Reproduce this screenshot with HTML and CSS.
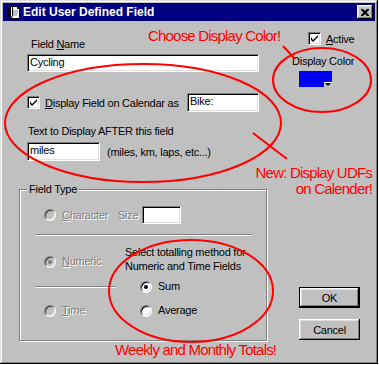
FILE: index.html
```html
<!DOCTYPE html>
<html lang="en">
<head>
  <meta charset="UTF-8">
  <title>Edit User Defined Field</title>
  <link rel="stylesheet" href="styles.css">
</head>
<body>
  <div class="window">
    <div class="titlebar">
      <svg class="app-icon" width="16" height="16" viewBox="0 0 16 16">
        <path d="M5.5 2.5h7l2 2v10h-9z" fill="#fff" stroke="#000"/>
        <path d="M12.5 2.5v2h2" fill="none" stroke="#000"/>
        <path d="M3.5 4.5v7a2 2 0 0 0 4 0v-8a1 1 0 0 0-2 0v7" fill="none" stroke="#000"/>
        <path d="M8 7h5M8 9h5M8 11h4" stroke="#808080"/>
      </svg>
      <span class="title">Edit User Defined Field</span>
      <span class="close">
        <svg width="8" height="7" viewBox="0 0 8 7"><path d="M0 0h2l2 2 2-2h2v1l-2.5 2.5 2.5 2.5v1h-2l-2-2-2 2h-2v-1l2.5-2.5-2.5-2.5z" fill="#000"/></svg>
      </span>
    </div>

    <div class="client">
      <div class="main">
        <div class="field-name">Field <u>N</u>ame</div>
        <div class="edit wide">Cycling</div>

        <div class="cal-row">
          <span class="check"><svg width="7" height="7" viewBox="0 0 7 7"><path d="M0 2v3l2 2 5-5v-2l-5 5z" fill="#000"/></svg></span>
          <span class="cal-label"><u>D</u>isplay Field on Calendar as</span>
          <div class="edit bike">Bike:</div>
        </div>

        <div class="after-label">Text to Display AFTER this field</div>
        <div class="after-row">
          <div class="edit miles">miles</div>
          <span class="hint">(miles, km, laps, etc...)</span>
        </div>

        <fieldset class="group">
          <legend>Field Type</legend>
          <div class="char-row">
            <span class="radio off"></span>
            <span class="opt dim char"><u>C</u>haracter</span>
            <span class="dim size">Size</span>
            <div class="edit small"></div>
          </div>
          <div class="sep long"></div>
          <div class="type">
            <div class="type-left">
              <div class="opt-row numeric">
                <span class="radio off on"></span>
                <span class="opt dim"><u>N</u>umeric</span>
              </div>
              <div class="sep short"></div>
              <div class="opt-row time">
                <span class="radio off"></span>
                <span class="opt dim"><u>T</u>ime</span>
              </div>
            </div>
            <div class="type-right">
              <div class="method">Select totalling method for<br>Numeric and Time Fields</div>
              <div class="opt-row sum">
                <span class="radio on"></span>
                <span class="opt">Sum</span>
              </div>
              <div class="opt-row avg">
                <span class="radio"></span>
                <span class="opt">Average</span>
              </div>
            </div>
          </div>
        </fieldset>
      </div>

      <div class="side">
        <div class="active">
          <span class="check"><svg width="7" height="7" viewBox="0 0 7 7"><path d="M0 2v3l2 2 5-5v-2l-5 5z" fill="#000"/></svg></span>
          <span class="active-label"><u>A</u>ctive</span>
        </div>
        <div class="color-label">Display Color</div>
        <div class="swatch"><span class="drop"></span></div>
        <div class="btn default">OK</div>
        <div class="btn cancel">Cancel</div>
      </div>
    </div>

    <svg class="marks" width="379" height="365" viewBox="0 0 379 365">
      <ellipse cx="143" cy="123" rx="138" ry="59"/>
      <path d="M253 133L287 159"/>
      <ellipse cx="322" cy="80" rx="49" ry="32"/>
      <path d="M283 46L295 59"/>
      <ellipse cx="191" cy="291" rx="82" ry="51"/>
    </svg>
    <div class="note note-color">Choose Display Color!</div>
    <div class="note note-new">New: Display UDFs<br>on Calender!</div>
    <div class="note note-totals">Weekly and Monthly Totals!</div>
  </div>
</body>
</html>
```

FILE: styles.css
```css
body{
	margin: 0;
	background: #fff;
	font-family: "Liberation Sans", Arial, sans-serif;
	font-size: 11px;
	letter-spacing: -0.25px;
	color: #000;
}
.window{
	position: relative;
	width: 378px;
	height: 364px;
	box-sizing: border-box;
	padding: 3px;
	background: #c0c0c0;
	box-shadow: inset -1px -1px #000, inset 1px 1px #dfdfdf, inset -2px -2px #808080, inset 2px 2px #fff;
}
.titlebar{
	height: 18px;
	background: #000080;
	color: #fff;
	display: flex;
	align-items: center;
	padding: 0 2px;
}
.title{
	font-weight: bold;
	font-size: 12px;
	letter-spacing: 0;
	margin-left: 2px;
}
.close{
	margin-left: auto;
	width: 16px;
	height: 14px;
	background: #c0c0c0;
	box-shadow: inset -1px -1px #000, inset 1px 1px #fff, inset -2px -2px #808080, inset 2px 2px #dfdfdf;
	display: flex;
	align-items: center;
	justify-content: center;
}
.client{
	display: flex;
}
.main{
	width: 249px;
	padding-left: 16px;
}
.side{
	flex: 1;
	display: flex;
	flex-direction: column;
	align-items: flex-start;
}

/* sunken fields */
.edit{
	box-sizing: border-box;
	height: 18px;
	line-height: 14px;
	padding: 0 2px;
	background: #fff;
	border: 1px solid;
	border-color: #808080 #fff #fff #808080;
	box-shadow: inset 1px 1px #000, inset -1px -1px #dfdfdf;
}
.check{
	box-sizing: border-box;
	width: 13px;
	height: 13px;
	background: #fff;
	border: 1px solid;
	border-color: #808080 #fff #fff #808080;
	box-shadow: inset 1px 1px #000, inset -1px -1px #dfdfdf;
	display: flex;
	align-items: center;
	justify-content: center;
}
.radio{
	position: relative;
	box-sizing: border-box;
	width: 12px;
	height: 12px;
	border-radius: 50%;
	background: #fff;
	border: 1px solid;
	border-color: #808080 #fff #fff #808080;
	box-shadow: inset 1px 1px #000, inset -1px -1px #dfdfdf;
	flex: none;
}
.radio.off{
	background: #c0c0c0;
	box-shadow: inset 1px 1px #404040, inset -1px -1px #dfdfdf;
}
.radio.on::after{
	content: "";
	position: absolute;
	left: 3px;
	top: 3px;
	width: 4px;
	height: 4px;
	border-radius: 50%;
	background: #000;
}
.radio.off.on::after{
	background: #808080;
}
.dim{
	color: #808080;
	text-shadow: 1px 1px #fff;
}
.sep{
	height: 0;
	border-top: 1px solid #808080;
	border-bottom: 1px solid #fff;
}

/* left part */
.field-name{
	margin: 17px 0 0 12px;
	line-height: 13px;
}
.edit.wide{
	margin: 3px 0 0 8px;
	width: 232px;
}
.cal-row{
	margin: 21px 0 0 8px;
	width: 232px;
	height: 19px;
	display: flex;
	align-items: center;
}
.cal-label{
	margin-left: 5px;
}
.edit.bike{
	margin-left: auto;
	width: 72px;
	height: 19px;
	line-height: 15px;
}
.after-label{
	margin: 13px 0 0 9px;
	line-height: 13px;
}
.after-row{
	margin: 4px 0 0 8px;
	height: 19px;
	display: flex;
	align-items: center;
}
.edit.miles{
	width: 73px;
	height: 19px;
	line-height: 15px;
}
.hint{
	margin-left: 7px;
}

.group{
	margin: 22px 0 0;
	padding: 0 0 23px;
	width: 248px;
	min-width: 0;
	box-sizing: border-box;
	border: 1px solid #808080;
	box-shadow: 1px 1px #fff, inset 1px 1px #fff;
}
.group legend{
	margin-left: 7px;
	padding: 0 2px;
	line-height: 13px;
	background: #c0c0c0;
}
.char-row{
	margin-top: 10px;
	height: 18px;
	padding-left: 24px;
	display: flex;
	align-items: center;
}
.opt{
	margin-left: 6px;
	line-height: 13px;
}
.opt.char{
	width: 56px;
}
.size{
	width: 24px;
}
.edit.small{
	width: 39px;
}
.sep.long{
	margin: 10px 0 0 15px;
	width: 216px;
}
.type{
	display: flex;
}
.type-left{
	width: 90px;
	margin-left: 15px;
}
.opt-row{
	height: 13px;
	display: flex;
	align-items: center;
	padding-left: 9px;
}
.opt-row.numeric{
	margin-top: 19px;
}
.sep.short{
	margin-top: 18px;
	width: 80px;
}
.opt-row.time{
	margin-top: 16px;
}
.method{
	margin-top: 9px;
	line-height: 14px;
}
.opt-row.sum{
	margin-top: 7px;
	padding-left: 15px;
}
.opt-row.avg{
	margin-top: 11px;
	padding-left: 15px;
}

/* right part */
.active{
	margin: 11px 0 0 40px;
	height: 13px;
	display: flex;
	align-items: center;
}
.active-label{
	margin-left: 5px;
}
.color-label{
	margin: 10px 0 0 24px;
	line-height: 13px;
}
.swatch{
	position: relative;
	margin: 3px 0 0 31px;
	width: 33px;
	height: 16px;
	background: #0000f0;
}
.drop{
	position: absolute;
	right: 0;
	bottom: 0;
	width: 8px;
	height: 4px;
	background: #c0c0c0;
	border-top: 1px solid #fff;
}
.drop::after{
	content: "";
	position: absolute;
	left: 1px;
	top: 0;
	border-left: 3px solid transparent;
	border-right: 3px solid transparent;
	border-top: 3px solid #000;
}
.btn{
	box-sizing: border-box;
	width: 61px;
	height: 21px;
	margin-left: 31px;
	display: flex;
	align-items: center;
	justify-content: center;
	background: #c0c0c0;
	box-shadow: inset -1px -1px #000, inset 1px 1px #fff, inset -2px -2px #808080, inset 2px 2px #dfdfdf;
}
.btn.default{
	margin-top: 200px;
	border: 1px solid #000;
}
.btn.cancel{
	margin-top: 11px;
}

/* red annotations drawn over the dialog */
.marks{
	position: absolute;
	left: 0;
	top: 0;
	pointer-events: none;
}
.marks ellipse,
.marks path{
	fill: none;
	stroke: #f00;
	stroke-width: 2;
}
.note{
	position: absolute;
	color: #f00;
	font-size: 15px;
	line-height: 16px;
	letter-spacing: -0.8px;
	white-space: nowrap;
}
.note-color{
	left: 148px;
	top: 28px;
}
.note-new{
	right: 6px;
	top: 165px;
	text-align: right;
}
.note-totals{
	left: 115px;
	top: 342px;
}
```
